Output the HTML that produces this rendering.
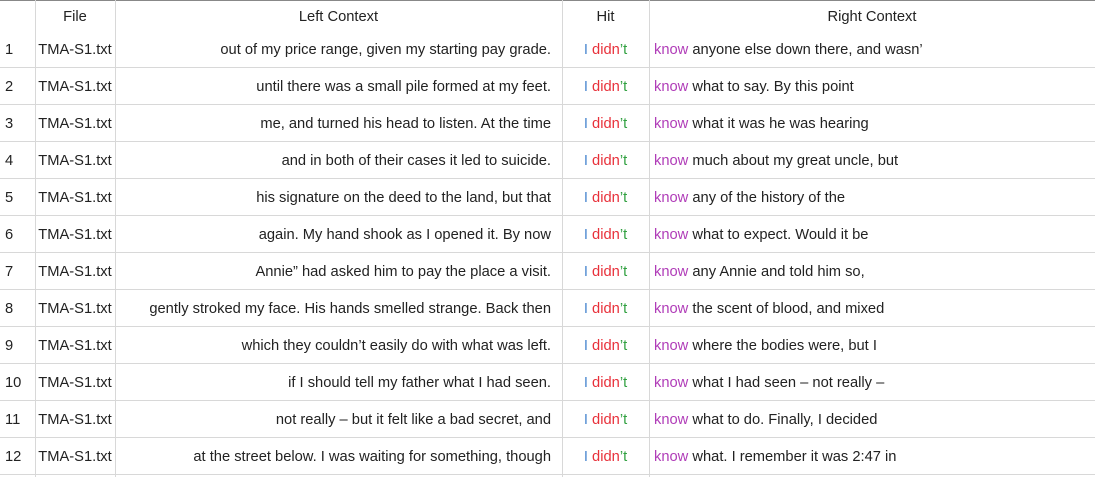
<!DOCTYPE html>
<html><head><style>
body{margin:0;width:1095px;height:477px;background:#fff;overflow:hidden;font-family:"Liberation Sans",sans-serif;font-size:14.7px;color:#222;position:relative}
.top{position:absolute;left:0;top:0;width:1095px;height:1px;background:#888}
.v{position:absolute;top:0;height:477px;width:1px;background:#d8d8d8}
.h{position:absolute;left:0;width:1095px;height:1px;background:#d8d8d8}
.c{position:absolute;line-height:20px;white-space:nowrap}
.I{color:#4a88d0}.d{color:#e8303a}.t{color:#30a040}.k{color:#b03cb8}
</style></head><body>
<div class="top"></div>
<div class="v" style="left:35px"></div>
<div class="v" style="left:115px"></div>
<div class="v" style="left:562px"></div>
<div class="v" style="left:649px"></div>
<div class="c" style="left:35px;width:80px;text-align:center;top:7px">File</div>
<div class="c" style="left:115px;width:447px;text-align:center;top:7px">Left Context</div>
<div class="c" style="left:562px;width:87px;text-align:center;top:7px">Hit</div>
<div class="c" style="left:649px;width:446px;text-align:center;top:7px">Right Context</div>
<div id="rows"></div>
<script>
var L=["out of my price range, given my starting pay grade.","until there was a small pile formed at my feet.","me, and turned his head to listen. At the time","and in both of their cases it led to suicide.","his signature on the deed to the land, but that","again. My hand shook as I opened it. By now","Annie” had asked him to pay the place a visit.","gently stroked my face. His hands smelled strange. Back then","which they couldn’t easily do with what was left.","if I should tell my father what I had seen.","not really – but it felt like a bad secret, and","at the street below. I was waiting for something, though"];
var R=["anyone else down there, and wasn’","what to say. By this point","what it was he was hearing","much about my great uncle, but","any of the history of the","what to expect. Would it be","any Annie and told him so,","the scent of blood, and mixed","where the bodies were, but I","what I had seen – not really –","what to do. Finally, I decided","what. I remember it was 2:47 in"];
var h="";
for(var i=0;i<12;i++){var y=30+i*37;
h+='<div class="h" style="top:'+(y+37)+'px"></div>';
var ty=y+10;
h+='<div class="c" style="left:5px;top:'+ty+'px">'+(i+1)+'</div>';
h+='<div class="c" style="left:35px;width:80px;text-align:center;top:'+ty+'px">TMA-S1.txt</div>';
h+='<div class="c" style="left:115px;width:436px;text-align:right;top:'+ty+'px">'+L[i]+'</div>';
h+='<div class="c" style="left:562px;width:87px;text-align:center;top:'+ty+'px"><span class="I">I</span> <span class="d">didn</span><span class="t">’t</span></div>';
h+='<div class="c" style="left:654px;top:'+ty+'px"><span class="k">know</span> '+R[i]+'</div>';}
document.getElementById("rows").innerHTML=h;
</script>
</body></html>
